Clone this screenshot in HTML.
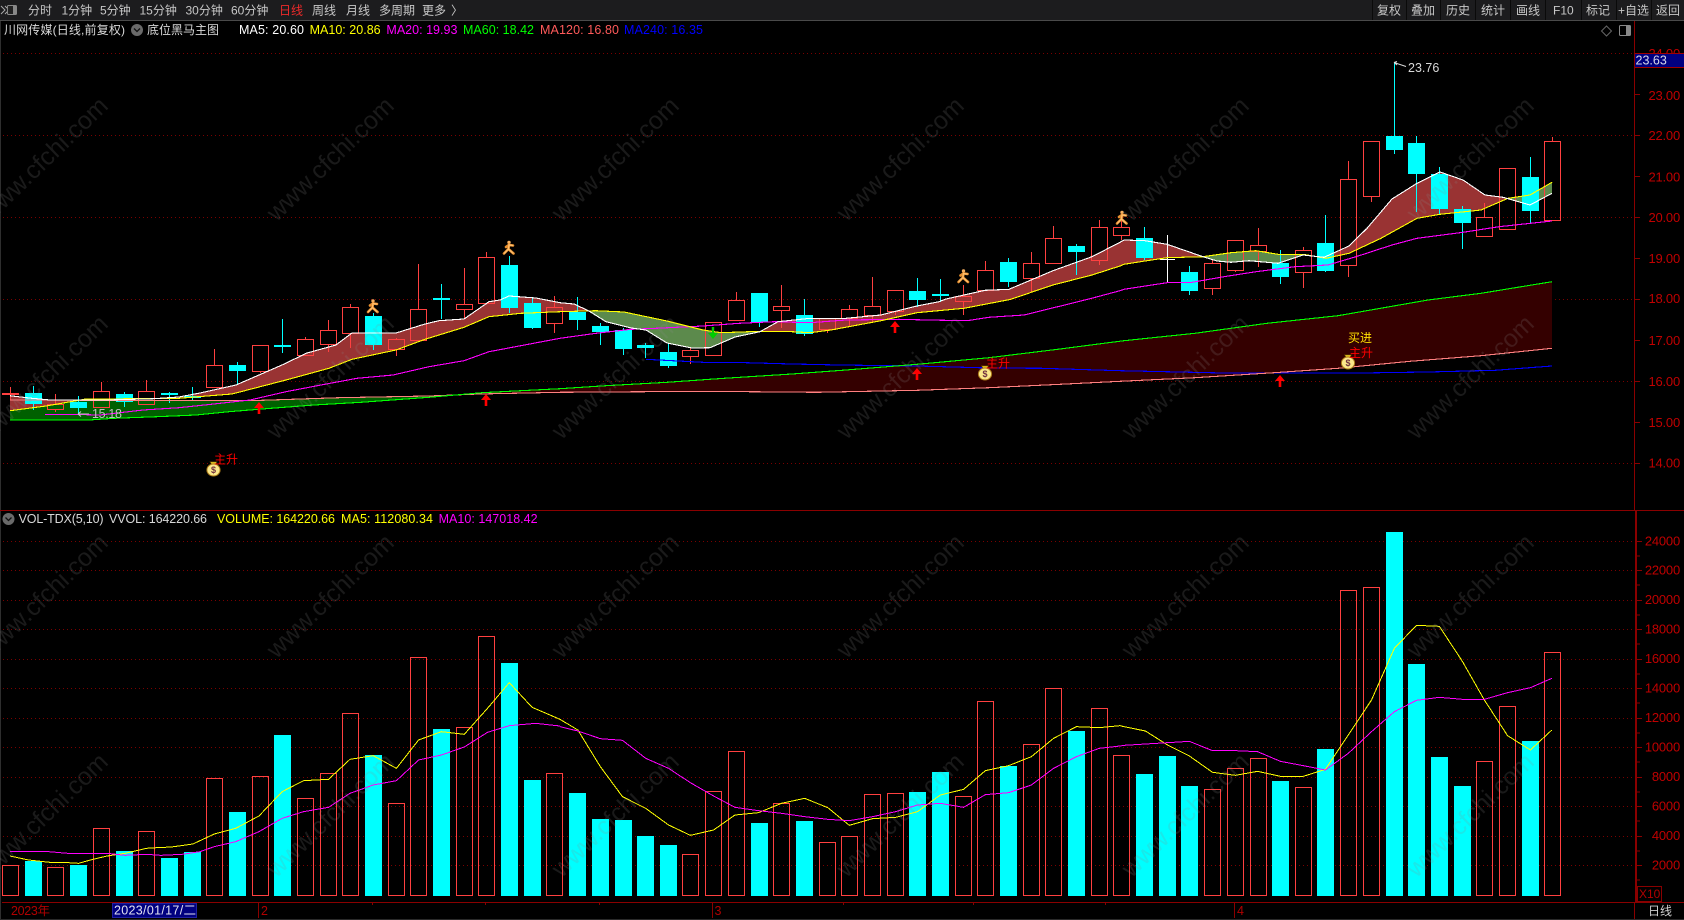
<!DOCTYPE html>
<html lang="zh"><head><meta charset="utf-8"><title>川网传媒</title>
<style>
html,body{margin:0;padding:0;background:#000;overflow:hidden}
svg{display:block;font-family:"Liberation Sans","Noto Sans CJK SC",sans-serif}
.tb{fill:#c8c8c8;font-size:12px}
.ax{fill:#c00000;font-size:13px;text-anchor:end;letter-spacing:-.2px}
.g{stroke:#7a0000;stroke-width:1;stroke-dasharray:1 3;fill:none}
.wm{fill:#888;opacity:.19;font-size:25px;text-anchor:middle}
.l{fill:none;stroke-width:1.1;shape-rendering:crispEdges}
.v{fill:none;stroke-width:1;vector-effect:non-scaling-stroke;shape-rendering:crispEdges}
</style></head><body>
<svg width="1684" height="920" viewBox="0 0 1684 920" xmlns="http://www.w3.org/2000/svg">
<defs>
<clipPath id="cr"><rect x="0" y="100" width="590" height="400"/><rect x="762" y="100" width="443" height="400"/><rect x="1325" y="100" width="181" height="400"/></clipPath>
<clipPath id="cg"><rect x="590" y="100" width="172" height="400"/><rect x="1205" y="100" width="120" height="400"/><rect x="1506" y="100" width="47" height="400"/></clipPath>
<clipPath id="c2"><rect x="0" y="100" width="476" height="400"/></clipPath>
<clipPath id="c3"><rect x="476" y="100" width="1100" height="400"/></clipPath>
<polygon id="b1" points="10,395.7 29,398 50,400 107,400 154,398.7 179,397 200,393 236,385 282,365 307,353 336,345 352,333 396,333 425,324 439,320.7 464,319 489,301.7 500,300 509,296 536,298 560,302.7 574,304 589,311 606,321.7 631,328 646,330 667,343 692,348 710,347.7 721,343 735,337 760,331.7 778,321.7 810,318.3 846,318.3 881,315 917,306 939,301.7 946,299 985,290.3 1009,289.3 1031,280 1053,270.7 1092,256.7 1120,242.3 1124,240 1145,240.7 1167,244.3 1203,256.7 1217,261 1231,262.3 1249,260.7 1278,263.3 1303,255 1324,257.3 1349,246 1367,228.3 1392,199 1417,183.3 1440,172 1463,180 1485,195 1503,197.3 1530,205 1552,193.3 1552,182.3 1530,195 1508,198.3 1481,210 1440,214.3 1417,218.3 1381,238.3 1349,253.3 1326,258.3 1303,254.3 1278,254.3 1256,250.7 1231,252.7 1203,256.7 1167,257.7 1145,261 1124,264.3 1120,266 1092,275 1053,285 1010,299.5 964,308.3 917,312.7 881,320.7 831,330 810,332.7 785,331.3 760,331.3 721,332.7 703,330 667,321 624,312 596,310.7 560,311.7 521,313.3 489,316.7 464,327.3 425,339.3 396,350 352,359.3 329,368.3 286,380 232,394 207,396 179,398.3 143,398.7 86,399 46,406 10,410.7"/>
<polygon id="b2" points="10,420 89,420 114,418.3 157,416.7 196,415 229,411.7 271,408.3 314,405 361,402.3 429,397.3 482,392.7 560,388.7 606,385.7 667,382.3 724,378.3 792,374 846,370 917,364.3 989,357.7 1060,349 1120,341.7 1124,340.7 1195,333.3 1267,323.3 1338,315.7 1428,300 1481,293.3 1552,281.7 1552,348.3 1481,355.7 1410,361.3 1338,368.3 1274,372.7 1195,377.7 1124,381.3 1120,381.3 1060,384.3 989,387.7 917,390.3 817,392.3 703,391.3 560,392.3 479,394 429,396 339,397.7 250,400.7 10,400"/>
<g id="run" fill="none" stroke-linecap="round"><circle cx="0" cy="-5.6" r="1.7" fill="#f7b060"/><path stroke="#e89030" stroke-width="2.6" d="M0,-3.4L-.6,1L-5,5.5M-.6,1L4.5,5.5M-3,-1L0,-3L4,-2.5"/><path stroke="#ffc070" stroke-width="1.2" d="M0,-3.4L-.6,1L-4.5,5.2M-.6,1L4,5.2M0,-3L3.6,-2.5"/></g>
<g id="bag"><path d="M-3.5,-8.2H3.5L1.3,-4.5H-1.3Z" fill="#e8c820" stroke="#604000" stroke-width=".6"/><ellipse cx="0" cy="0" rx="6.6" ry="6" fill="#fbe88a" stroke="#a87818" stroke-width="1"/><text x="0" y="3.2" font-size="9" font-weight="bold" text-anchor="middle" fill="#703040">$</text></g>
<path id="ua" d="M0,0L-5,6H-1.3V12H1.3V6H5Z"/>
</defs>
<rect width="1684" height="920" fill="#000"/>
<!-- toolbar -->
<rect width="1684" height="20" fill="#1c1c1e"/>
<rect y="20" width="1684" height="1" fill="#4a4a4a"/>
<rect x="0" y="21" width="1" height="898" fill="#2e2e2e"/>
<path d="M1,6L5,10L1,14M5,6L9,10L5,14" fill="none" stroke="#aaa" stroke-width="1"/>
<rect x="7.5" y="5.5" width="9" height="9" rx="1" fill="#222" stroke="#888"/><rect x="13" y="6" width="3" height="8" fill="#888"/>
<g class="tb">
<text x="28" y="14.5">分时</text><text x="61.5" y="14.5">1分钟</text><text x="100" y="14.5">5分钟</text><text x="139.5" y="14.5">15分钟</text><text x="185.5" y="14.5">30分钟</text><text x="231" y="14.5">60分钟</text>
<text x="279" y="14.5" style="fill:#ee2a2a">日线</text><text x="312" y="14.5">周线</text><text x="346" y="14.5">月线</text><text x="379" y="14.5">多周期</text><text x="422" y="14.5">更多</text><text x="451" y="14.5">〉</text>
<text x="1377" y="14.5">复权</text><text x="1411" y="14.5">叠加</text><text x="1446" y="14.5">历史</text><text x="1481" y="14.5">统计</text><text x="1516" y="14.5">画线</text><text x="1553" y="14.5">F10</text><text x="1586" y="14.5">标记</text><text x="1618" y="14.5">+自选</text><text x="1656" y="14.5">返回</text>
</g>
<path d="M1372.5,0V20M1406.5,0V20M1440.5,0V20M1475.5,0V20M1510.5,0V20M1545.5,0V20M1581.5,0V20M1616.5,0V20M1651.5,0V20" stroke="#0a0a0a" stroke-width="1"/>
<!-- grids -->
<path class="g" d="M3,53.5H1634M3,135.5H1634M3,217.5H1634M3,299.5H1634M3,381.5H1634M3,463.5H1634M3,541.5H1634M3,570.5H1634M3,600.5H1634M3,629.5H1634M3,659.5H1634M3,688.5H1634M3,718.5H1634M3,747.5H1634M3,777.5H1634M3,806.5H1634M3,836.5H1634M3,865.5H1634"/>
<!-- bands -->
<use href="#b2" fill="#006000" clip-path="url(#c2)"/>
<use href="#b2" fill="#340000" clip-path="url(#c3)"/>
<use href="#b1" fill="#993333" clip-path="url(#cr)"/>
<use href="#b1" fill="#5c8a4c" clip-path="url(#cg)"/>
<!-- cyan candles -->
<path stroke="#0ff" stroke-width="1" fill="none" shape-rendering="crispEdges" d="M33.5,386V410M78.5,396V415M124.5,392V407M169.5,392V403M192.5,387V401M237.5,362V384M282.5,319V353M373.5,313V350M441.5,284V319M509.5,256V313M532.5,298V329M577.5,297V330M600.5,323V345M623.5,328V355M645.5,343V358M668.5,343V368M759.5,293V327M804.5,299V336M917.5,278V307M940.5,279V302M1008.5,258V287M1076.5,244V275M1144.5,227V260M1189.5,266V295M1280.5,250V284M1325.5,215V272M1394.5,62V154M1416.5,136V212M1439.5,167V214M1462.5,206V249M1530.5,157V224"/>
<path fill="#0ff" shape-rendering="crispEdges" d="M25,393h17v11h-17zM70,402h17v6h-17zM116,394h17v8h-17zM161,393h17v2h-17zM184,396h17v2h-17zM229,365h17v6h-17zM274,345h17v2h-17zM365,316h17v29h-17zM433,298h17v2h-17zM501,265h17v43h-17zM524,303h17v25h-17zM569,312h17v8h-17zM592,326h17v6h-17zM615,330h17v19h-17zM637,345h17v3h-17zM660,352h17v14h-17zM751,293h17v29h-17zM796,315h17v19h-17zM909,291h17v9h-17zM932,294h17v2h-17zM1000,262h17v20h-17zM1068,246h17v6h-17zM1136,238h17v20h-17zM1181,272h17v19h-17zM1272,263h17v14h-17zM1317,243h17v28h-17zM1386,136h17v14h-17zM1408,143h17v31h-17zM1431,174h17v35h-17zM1454,209h17v14h-17zM1522,177h17v34h-17z"/>
<!-- red candles -->
<path stroke="#ff4040" stroke-width="1" fill="none" shape-rendering="crispEdges" d="M10.5,387V400M47.5,404.5h16v5h-16zM55.5,394V404M55.5,409V412M93.5,391.5h16v16h-16zM101.5,382V391M138.5,391.5h16v13h-16zM146.5,380V391M206.5,365.5h16v22h-16zM214.5,349V365M252.5,345.5h16v26h-16zM260.5,371V373M297.5,339.5h16v16h-16zM305.5,337V339M320.5,330.5h16v14h-16zM328.5,320V330M328.5,345V352M342.5,307.5h16v26h-16zM350.5,304V307M350.5,333V348M388.5,339.5h16v10h-16zM396.5,338V339M396.5,349V356M410.5,309.5h16v31h-16zM418.5,264V309M456.5,304.5h16v5h-16zM464.5,268V304M464.5,309V318M478.5,257.5h16v46h-16zM486.5,252V257M546.5,307.5h16v16h-16zM554.5,296V307M554.5,323V333M682.5,350.5h16v6h-16zM690.5,348V350M690.5,356V364M705.5,322.5h16v33h-16zM728.5,300.5h16v20h-16zM736.5,292V300M773.5,306.5h16v4h-16zM781.5,285V306M781.5,310V328M819.5,318.5h16v11h-16zM827.5,329V333M841.5,309.5h16v9h-16zM849.5,305V309M849.5,318V327M864.5,306.5h16v9h-16zM872.5,277V306M872.5,316V323M887.5,290.5h16v21h-16zM895.5,312V315M955.5,296.5h16v5h-16zM963.5,285V296M963.5,302V315M977.5,270.5h16v20h-16zM985.5,261V270M1023.5,263.5h16v15h-16zM1031.5,252V263M1031.5,279V292M1045.5,238.5h16v25h-16zM1053.5,226V238M1091.5,227.5h16v33h-16zM1099.5,220V227M1099.5,260V265M1113.5,227.5h16v8h-16zM1121.5,218V227M1121.5,235V240M1204.5,263.5h16v25h-16zM1212.5,259V263M1212.5,289V295M1227.5,240.5h16v30h-16zM1235.5,271V272M1250.5,245.5h16v6h-16zM1258.5,228V245M1258.5,251V267M1295.5,250.5h16v22h-16zM1303.5,247V250M1303.5,273V288M1340.5,179.5h16v86h-16zM1348.5,161V179M1348.5,266V277M1363.5,141.5h16v55h-16zM1371.5,197V202M1476.5,217.5h16v19h-16zM1484.5,203V217M1499.5,168.5h16v61h-16zM1544.5,141.5h16v79h-16zM1552.5,137V141"/>
<rect x="2" y="393" width="17" height="2" fill="#ff4040"/>
<path stroke="#fff" stroke-width="1" fill="none" shape-rendering="crispEdges" d="M1167.5,235V283M1160,259.5H1175"/>
<!-- MA lines -->
<polyline class="l" stroke="#0000ff" points="646,359.3 703,362.3 746,362.7 792,364 839,365 917,366 989,368 1042,368.3 1120,370.7 1224,373 1360,373 1428,372 1495,370.3 1552,366"/>
<polyline class="l" stroke="#ff8080" points="10,400 250,400.7 339,397.7 429,396 479,394 560,392.3 703,391.3 817,392.3 917,390.3 989,387.7 1060,384.3 1120,381.3 1195,377.7 1274,372.7 1338,368.3 1410,361.3 1481,355.7 1552,348.3"/>
<polyline class="l" stroke="#00ff00" points="10,420 89,420 114,418.3 157,416.7 196,415 229,411.7 271,408.3 314,405 361,402.3 429,397.3 482,392.7 560,388.7 606,385.7 667,382.3 724,378.3 792,374 846,370 917,364.3 989,357.7 1060,349 1124,340.7 1195,333.3 1267,323.3 1338,315.7 1428,300 1481,293.3 1552,281.7"/>
<polyline class="l" stroke="#ff00ff" points="45,414.3 68,414.3 100,415 143,410 179,407.7 214,404 250,400 286,391.7 321,385 357,378.3 393,375 429,366.7 464,360.7 489,351.7 560,338.3 596,333.3 631,329.3 656,328.3 703,326 739,323.3 774,321.7 810,322.7 846,320 899,319.3 928,320 967,320.7 989,317.3 1024,315 1089,299 1120,290.7 1124,289.3 1167,282.7 1192,282.3 1224,276.7 1256,271.7 1295,266.7 1328,265 1356,256.7 1392,245 1417,238.3 1463,232.3 1499,226.7 1552,221"/>
<polyline class="l" stroke="#ffff00" points="10,410.7 46,406 86,399 143,398.7 179,398.3 207,396 232,394 286,380 329,368.3 352,359.3 396,350 425,339.3 464,327.3 489,316.7 521,313.3 560,311.7 596,310.7 624,312 667,321 703,330 721,332.7 760,331.3 785,331.3 810,332.7 831,330 881,320.7 917,312.7 964,308.3 1010,299.5 1053,285 1092,275 1120,266 1124,264.3 1145,261 1167,257.7 1203,256.7 1231,252.7 1256,250.7 1278,254.3 1303,254.3 1326,258.3 1349,253.3 1381,238.3 1417,218.3 1440,214.3 1481,210 1508,198.3 1530,195 1552,182.3"/>
<polyline class="l" stroke="#fff" points="10,395.7 29,398 50,400 107,400 154,398.7 179,397 200,393 236,385 282,365 307,353 336,345 352,333 396,333 425,324 439,320.7 464,319 489,301.7 500,300 509,296 536,298 560,302.7 574,304 589,311 606,321.7 631,328 646,330 667,343 692,348 710,347.7 721,343 735,337 760,331.7 778,321.7 810,318.3 846,318.3 881,315 917,306 939,301.7 946,299 985,290.3 1009,289.3 1031,280 1053,270.7 1092,256.7 1120,242.3 1124,240 1145,240.7 1167,244.3 1203,256.7 1217,261 1231,262.3 1249,260.7 1278,263.3 1303,255 1324,257.3 1349,246 1367,228.3 1392,199 1417,183.3 1440,172 1463,180 1485,195 1503,197.3 1530,205 1552,193.3"/>
<!-- signals -->
<use href="#run" x="509" y="248"/><use href="#run" x="373" y="306.5"/><use href="#run" x="963.5" y="276.5"/><use href="#run" x="1122" y="218"/>
<g fill="#f00"><use href="#ua" x="259" y="402"/><use href="#ua" x="486" y="394"/><use href="#ua" x="895" y="321"/><use href="#ua" x="917" y="368"/><use href="#ua" x="1280" y="375"/></g>
<path d="M713,339L718,333H714.2V327H711.8V333H708Z" fill="#00cc00"/>
<use href="#bag" x="213.5" y="470"/><use href="#bag" x="985" y="374"/><use href="#bag" x="1348" y="363"/>
<g font-size="12" fill="#f00"><text x="214" y="463.5" textLength="24">主升</text><text x="986" y="367.5" textLength="24">主升</text><text x="1349" y="357" textLength="24">主升</text></g>
<text x="1348" y="342" font-size="12" fill="#ffe000" textLength="24">买进</text>
<!-- price annots -->
<path d="M78,414H89M78,414L81,411.5M78,414L81,416.5" stroke="#ccc" fill="none"/>
<text x="92" y="418" font-size="12.5" fill="#c0c0c0" textLength="30">15.18</text>
<text x="1408" y="72" font-size="12.5" fill="#d8d8d8">23.76</text>
<path d="M1394,62.5L1397,61.5M1394,62.5L1397,65M1394,62.5L1406,66.5" stroke="#ddd" fill="none"/>
<!-- volume bars -->
<path fill="#0ff" shape-rendering="crispEdges" d="M25,861h17v35h-17zM70,865h17v31h-17zM116,851h17v45h-17zM161,858h17v38h-17zM184,852h17v44h-17zM229,812h17v84h-17zM274,735h17v161h-17zM365,755h17v141h-17zM433,729h17v167h-17zM501,663h17v233h-17zM524,780h17v116h-17zM569,793h17v103h-17zM592,819h17v77h-17zM615,820h17v76h-17zM637,836h17v60h-17zM660,845h17v51h-17zM751,823h17v73h-17zM796,821h17v75h-17zM909,792h17v104h-17zM932,772h17v124h-17zM1000,766h17v130h-17zM1068,731h17v165h-17zM1136,774h17v122h-17zM1159,756h17v140h-17zM1181,786h17v110h-17zM1272,781h17v115h-17zM1317,749h17v147h-17zM1386,532h17v364h-17zM1408,664h17v232h-17zM1431,757h17v139h-17zM1454,786h17v110h-17zM1522,741h17v155h-17z"/>
<path stroke="#ff4040" stroke-width="1" fill="none" shape-rendering="crispEdges" d="M2.5,865.5h16v30h-16zM47.5,867.5h16v28h-16zM93.5,828.5h16v67h-16zM138.5,831.5h16v64h-16zM206.5,778.5h16v117h-16zM252.5,776.5h16v119h-16zM297.5,798.5h16v97h-16zM320.5,773.5h16v122h-16zM342.5,713.5h16v182h-16zM388.5,803.5h16v92h-16zM410.5,657.5h16v238h-16zM456.5,727.5h16v168h-16zM478.5,636.5h16v259h-16zM546.5,773.5h16v122h-16zM682.5,854.5h16v41h-16zM705.5,791.5h16v104h-16zM728.5,751.5h16v144h-16zM773.5,803.5h16v92h-16zM819.5,842.5h16v53h-16zM841.5,836.5h16v59h-16zM864.5,794.5h16v101h-16zM887.5,793.5h16v102h-16zM955.5,796.5h16v99h-16zM977.5,701.5h16v194h-16zM1023.5,744.5h16v151h-16zM1045.5,688.5h16v207h-16zM1091.5,708.5h16v187h-16zM1113.5,755.5h16v140h-16zM1204.5,789.5h16v106h-16zM1227.5,768.5h16v127h-16zM1250.5,758.5h16v137h-16zM1295.5,787.5h16v108h-16zM1340.5,590.5h16v305h-16zM1363.5,587.5h16v308h-16zM1476.5,761.5h16v134h-16zM1499.5,706.5h16v189h-16zM1544.5,652.5h16v243h-16z"/>
<!-- volume MA -->
<g transform="translate(0,620) scale(.35714,.33333)">
<polyline class="v" stroke="#ff0" points="28,708 80,720 140,727 190,728 220,730 260,718 300,708 350,700 410,685 440,683 480,681 540,672 600,642 660,625 725,588 790,515 850,482 920,478 980,418 1045,407 1110,445 1172,360 1236,335 1300,343 1365,265 1426,188 1490,262 1568,298"/>
<polyline class="v" stroke="#f0f" points="28,694 125,694 190,700 300,700 350,706 410,703 450,706 510,703 560,695 600,680 660,665 725,635 790,595 850,575 920,562 980,520 1045,495 1110,482 1172,420 1236,405 1300,381 1365,337 1426,317 1500,310 1568,318"/>
</g>
<g transform="translate(560,620) scale(.35714,.33333)">
<polyline class="v" stroke="#ff0" points="0,298 50,330 113,440 175,530 240,565 304,615 365,646 430,630 490,585 556,578 620,550 685,535 750,563 810,616 875,596 940,592 1001,575 1065,525 1130,508 1191,452 1256,437 1320,410 1382,355 1446,320 1510,323 1568,317 1579,320"/>
<polyline class="v" stroke="#f0f" points="0,320 50,333 113,356 175,361 240,415 304,445 365,488 430,528 490,562 556,572 620,580 685,590 750,598 810,602 875,590 940,575 1001,555 1065,550 1130,562 1191,524 1256,518 1320,495 1382,445 1446,410 1510,385 1568,378 1579,376"/>
</g>
<g transform="translate(1124,620) scale(.35714,.33333)">
<polyline class="v" stroke="#ff0" points="0,320 60,333 122,375 183,408 248,457 312,466 374,454 438,469 502,469 564,448 628,345 693,240 757,85 819,16 883,19 948,125 1009,240 1074,347 1138,390 1198,330"/>
<polyline class="v" stroke="#f0f" points="0,376 60,372 122,368 183,364 248,392 312,392 374,395 438,424 502,437 564,450 628,400 693,335 757,275 819,241 883,232 948,238 1009,238 1074,218 1138,203 1198,175"/>
</g>
<!-- watermark -->
<g class="wm">
<text transform="translate(50,165) rotate(-44)">www.cfchi.com</text><text transform="translate(336,165) rotate(-44)">www.cfchi.com</text><text transform="translate(621,165) rotate(-44)">www.cfchi.com</text><text transform="translate(906,165) rotate(-44)">www.cfchi.com</text><text transform="translate(1191,165) rotate(-44)">www.cfchi.com</text><text transform="translate(1476,165) rotate(-44)">www.cfchi.com</text>
<text transform="translate(50,383) rotate(-44)">www.cfchi.com</text><text transform="translate(336,383) rotate(-44)">www.cfchi.com</text><text transform="translate(621,383) rotate(-44)">www.cfchi.com</text><text transform="translate(906,383) rotate(-44)">www.cfchi.com</text><text transform="translate(1191,383) rotate(-44)">www.cfchi.com</text><text transform="translate(1476,383) rotate(-44)">www.cfchi.com</text>
<text transform="translate(50,602) rotate(-44)">www.cfchi.com</text><text transform="translate(336,602) rotate(-44)">www.cfchi.com</text><text transform="translate(621,602) rotate(-44)">www.cfchi.com</text><text transform="translate(906,602) rotate(-44)">www.cfchi.com</text><text transform="translate(1191,602) rotate(-44)">www.cfchi.com</text><text transform="translate(1476,602) rotate(-44)">www.cfchi.com</text>
<text transform="translate(50,821) rotate(-44)">www.cfchi.com</text><text transform="translate(336,821) rotate(-44)">www.cfchi.com</text><text transform="translate(621,821) rotate(-44)">www.cfchi.com</text><text transform="translate(906,821) rotate(-44)">www.cfchi.com</text><text transform="translate(1191,821) rotate(-44)">www.cfchi.com</text><text transform="translate(1476,821) rotate(-44)">www.cfchi.com</text>
</g>
<!-- frame -->
<rect x="0" y="510" width="1684" height="1" fill="#8a0000"/>
<rect x="2" y="902" width="1682" height="1" fill="#8a0000"/>
<rect x="1634" y="21" width="1" height="489" fill="#8a0000"/>
<rect x="1635" y="510" width="2" height="392" fill="#8a0000"/>
<rect x="1634" y="902" width="1" height="17" fill="#8a0000"/>
<rect x="0" y="919" width="1684" height="1" fill="#2a2a2a"/>
<path stroke="#8a0000" fill="none" d="M1635,53.5h5M1635,94.5h5M1635,135.5h5M1635,176.5h5M1635,217.5h5M1635,258.5h5M1635,299.5h5M1635,340.5h5M1635,381.5h5M1635,422.5h5M1635,463.5h5M1637,541.5h5M1637,570.5h5M1637,600.5h5M1637,629.5h5M1637,659.5h5M1637,688.5h5M1637,718.5h5M1637,747.5h5M1637,777.5h5M1637,806.5h5M1637,836.5h5M1637,865.5h5M1637,556h3M1637,585h3M1637,615h3M1637,644h3M1637,674h3M1637,703h3M1637,733h3M1637,762h3M1637,792h3M1637,821h3M1637,851h3M1637,880h3"/>
<!-- axis labels -->
<g class="ax">
<text x="1680" y="58">24.00</text><text x="1680" y="100">23.00</text><text x="1680" y="140">22.00</text><text x="1680" y="181.5">21.00</text><text x="1680" y="222">20.00</text><text x="1680" y="263">19.00</text><text x="1680" y="303">18.00</text><text x="1680" y="345">17.00</text><text x="1680" y="386">16.00</text><text x="1680" y="427">15.00</text><text x="1680" y="467.5">14.00</text>
<text x="1680" y="545.5">24000</text><text x="1680" y="574.5">22000</text><text x="1680" y="604">20000</text><text x="1680" y="633.5">18000</text><text x="1680" y="663">16000</text><text x="1680" y="692.5">14000</text><text x="1680" y="722">12000</text><text x="1680" y="751.5">10000</text><text x="1680" y="781">8000</text><text x="1680" y="810.5">6000</text><text x="1680" y="840">4000</text><text x="1680" y="869.5">2000</text>
</g>
<rect x="1635" y="53" width="49" height="15" fill="#000080"/><path d="M1635,53.5H1684M1635,67.5H1684" stroke="#a00000"/>
<text x="1635.5" y="64.5" font-size="12.5" fill="#d8d8e8">23.63</text>
<rect x="1637.5" y="886.5" width="24" height="15" fill="#000" stroke="#8a0000"/><text x="1639" y="898" font-size="12" fill="#b00000">X10</text>
<!-- top-right icons -->
<path d="M1606.5,26L1611.5,31L1606.5,36L1601.5,31Z" fill="none" stroke="#666"/>
<rect x="1619.5" y="25.5" width="11" height="10" rx="1" fill="none" stroke="#888"/><rect x="1626" y="26" width="4" height="9" fill="#888"/>
<!-- title -->
<text x="4" y="34" font-size="12" fill="#d8d8d8" textLength="121" lengthAdjust="spacing">川网传媒(日线,前复权)</text>
<circle cx="137" cy="30" r="6" fill="#6a6a6a"/><path d="M134,28.5L137,31.5L140,28.5" fill="none" stroke="#111" stroke-width="1.3"/>
<text x="147" y="34" font-size="12" fill="#d8d8d8">底位黑马主图</text>
<g font-size="12.5">
<text x="239" y="34" fill="#fff" textLength="65">MA5: 20.60</text>
<text x="309.6" y="34" fill="#ff0" textLength="71">MA10: 20.86</text>
<text x="386.4" y="34" fill="#f0f" textLength="71">MA20: 19.93</text>
<text x="463" y="34" fill="#0f0" textLength="71">MA60: 18.42</text>
<text x="540" y="34" fill="#ff5a5a" textLength="79">MA120: 16.80</text>
<text x="624" y="34" fill="#0000ff" textLength="79">MA240: 16.35</text>
</g>
<!-- volume title -->
<circle cx="8.5" cy="519" r="6" fill="#6a6a6a"/><path d="M5.5,517.5L8.5,520.5L11.5,517.5" fill="none" stroke="#111" stroke-width="1.3"/>
<g font-size="12.5">
<text x="18.6" y="523" fill="#d8d8d8" textLength="85">VOL-TDX(5,10)</text>
<text x="109" y="523" fill="#d8d8d8" textLength="98">VVOL: 164220.66</text>
<text x="217" y="523" fill="#ff0" textLength="118">VOLUME: 164220.66</text>
<text x="341" y="523" fill="#ff0" textLength="92">MA5: 112080.34</text>
<text x="438.6" y="523" fill="#f0f" textLength="99">MA10: 147018.42</text>
</g>
<!-- date strip -->
<text x="11" y="915" font-size="12.5" fill="#b00000" textLength="39">2023年</text>
<rect x="112.5" y="903.5" width="84" height="14" fill="#000080" stroke="#2020a0"/>
<text x="114" y="914.5" font-size="12.5" fill="#e0e0f0" textLength="82">2023/01/17/二</text>
<path stroke="#8a0000" fill="none" d="M258.5,903V918M712.5,903V918M1234.5,903V918M372.5,903V905M485.5,903V905M599.5,903V905M843.5,903V905M973.5,903V905M1105.5,903V905"/>
<g font-size="12.5" fill="#b00000"><text x="261" y="915">2</text><text x="714.5" y="915">3</text><text x="1237" y="915">4</text></g>
<text x="1648" y="915" font-size="12" fill="#d0d0d0">日线</text>
</svg>
</body></html>
